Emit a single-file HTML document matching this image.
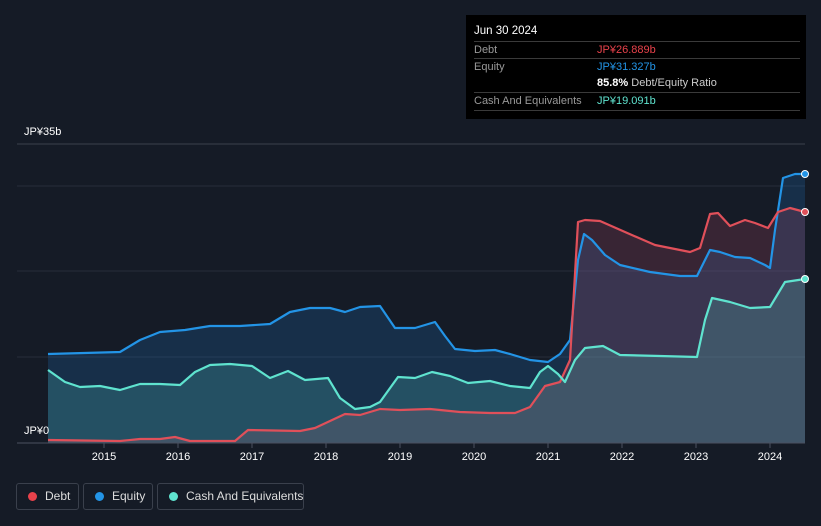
<!DOCTYPE html>
<html><head><meta charset="utf-8"><style>
html,body{margin:0;width:821px;height:526px;overflow:hidden}
body{background:#151b26;font-family:"Liberation Sans","Noto Sans CJK JP",sans-serif;position:relative;color:#fff}
.tt{position:absolute;left:466px;top:15px;width:340px;height:104px;background:#000;font-size:11px}
.tt .h{position:absolute;left:8px;top:10px;font-size:11.5px;color:#fff}
.row{position:absolute;left:8px;width:326px;border-top:1px solid #3a3a3a;height:17px;line-height:17px;color:#999;white-space:nowrap}
.row span{position:absolute;left:123px}
.lg{position:absolute;top:483px;height:27px;border:1px solid #3a404c;border-radius:3px;font-size:12px;color:#ddd;line-height:25px;box-sizing:border-box;white-space:nowrap}
.lg i{position:absolute;left:11px;top:8px;width:9px;height:9px;border-radius:50%}
.lg b{font-weight:normal;position:absolute;left:28px}
.ax{position:absolute;font-size:11px;color:#fff}
</style></head><body>
<svg width="821" height="526" style="position:absolute;left:0;top:0">
<line x1="17" y1="144" x2="805" y2="144" stroke="#3a404c"/>
<line x1="17" y1="186" x2="805" y2="186" stroke="#262d3a"/>
<line x1="17" y1="271" x2="805" y2="271" stroke="#262d3a"/>
<line x1="17" y1="357" x2="805" y2="357" stroke="#262d3a"/>
<path fill="rgba(33,120,200,0.22)" d="M48,354 L120,352 L140,340 L160,332 L185,330 L210,326 L240,326 L270,324 L290,312 L310,308 L330,308 L345,312 L360,307 L380,306 L395,328 L415,328 L435,322 L445,336 L455,349 L475,351 L495,350 L510,354 L530,360 L548,362 L560,354 L570,340 L578,260 L584,234 L592,240 L605,255 L620,265 L650,272 L680,276 L697,276 L705,260 L710,250 L720,252 L735,257 L750,258 L765,265 L770,268 L775,230 L783,178 L795,174 L805,174 L805,443 L48,443Z"/>
<path fill="rgba(200,80,110,0.2)" d="M48,440 L120,441 L140,439 L160,439 L175,437 L190,441 L235,441 L248,430 L300,431 L315,428 L345,414 L360,415 L380,409 L400,410 L430,409 L460,412 L490,413 L515,413 L530,407 L545,386 L560,382 L570,360 L578,222 L585,220 L600,221 L625,232 L655,245 L690,252 L700,248 L710,214 L718,213 L730,226 L745,220 L755,223 L768,228 L778,212 L790,208 L805,212 L805,443 L48,443Z"/>
<path fill="rgba(88,200,190,0.22)" d="M48,370 L65,382 L80,387 L100,386 L120,390 L140,384 L160,384 L180,385 L195,372 L210,365 L230,364 L252,366 L270,378 L288,371 L305,380 L328,378 L340,398 L355,409 L370,407 L380,402 L398,377 L415,378 L432,372 L450,376 L468,383 L490,381 L510,386 L530,388 L540,372 L548,366 L558,374 L565,382 L575,360 L585,348 L603,346 L620,355 L660,356 L697,357 L705,320 L712,298 L730,302 L750,308 L770,307 L785,282 L805,279 L805,443 L48,443Z"/>
<g fill="none" stroke-width="2.2" stroke-linejoin="round">
<path stroke="#2394e6" d="M48,354 L120,352 L140,340 L160,332 L185,330 L210,326 L240,326 L270,324 L290,312 L310,308 L330,308 L345,312 L360,307 L380,306 L395,328 L415,328 L435,322 L445,336 L455,349 L475,351 L495,350 L510,354 L530,360 L548,362 L560,354 L570,340 L578,260 L584,234 L592,240 L605,255 L620,265 L650,272 L680,276 L697,276 L705,260 L710,250 L720,252 L735,257 L750,258 L765,265 L770,268 L775,230 L783,178 L795,174 L805,174"/>
<path stroke="#e0505a" d="M48,440 L120,441 L140,439 L160,439 L175,437 L190,441 L235,441 L248,430 L300,431 L315,428 L345,414 L360,415 L380,409 L400,410 L430,409 L460,412 L490,413 L515,413 L530,407 L545,386 L560,382 L570,360 L578,222 L585,220 L600,221 L625,232 L655,245 L690,252 L700,248 L710,214 L718,213 L730,226 L745,220 L755,223 L768,228 L778,212 L790,208 L805,212"/>
<path stroke="#5fe3cf" d="M48,370 L65,382 L80,387 L100,386 L120,390 L140,384 L160,384 L180,385 L195,372 L210,365 L230,364 L252,366 L270,378 L288,371 L305,380 L328,378 L340,398 L355,409 L370,407 L380,402 L398,377 L415,378 L432,372 L450,376 L468,383 L490,381 L510,386 L530,388 L540,372 L548,366 L558,374 L565,382 L575,360 L585,348 L603,346 L620,355 L660,356 L697,357 L705,320 L712,298 L730,302 L750,308 L770,307 L785,282 L805,279"/>
</g>
<line x1="17" y1="443" x2="805" y2="443" stroke="#4a5060"/>
<g stroke="#4a5060"><line x1="104" y1="443" x2="104" y2="448"/><line x1="178" y1="443" x2="178" y2="448"/><line x1="252" y1="443" x2="252" y2="448"/><line x1="326" y1="443" x2="326" y2="448"/><line x1="400" y1="443" x2="400" y2="448"/><line x1="474" y1="443" x2="474" y2="448"/><line x1="548" y1="443" x2="548" y2="448"/><line x1="622" y1="443" x2="622" y2="448"/><line x1="696" y1="443" x2="696" y2="448"/><line x1="770" y1="443" x2="770" y2="448"/></g>
<circle cx="805" cy="174" r="3.5" fill="#2394e6" stroke="#fff" stroke-width="1"/>
<circle cx="805" cy="212" r="3.5" fill="#e0505a" stroke="#fff" stroke-width="1"/>
<circle cx="805" cy="279" r="3.5" fill="#5fe3cf" stroke="#fff" stroke-width="1"/>
<g fill="#fff" font-size="11" text-anchor="middle" font-family="Liberation Sans,sans-serif">
<text x="104" y="460">2015</text><text x="178" y="460">2016</text><text x="252" y="460">2017</text><text x="326" y="460">2018</text><text x="400" y="460">2019</text><text x="474" y="460">2020</text><text x="548" y="460">2021</text><text x="622" y="460">2022</text><text x="696" y="460">2023</text><text x="770" y="460">2024</text>
</g>
</svg>
<div class="ax" style="left:24px;top:126px">JP¥35b</div>
<div class="ax" style="left:24px;top:425px">JP¥0</div>
<div class="tt">
<div class="h">Jun 30 2024</div>
<div class="row" style="top:26px">Debt<span style="color:#e8424b">JP¥26.889b</span></div>
<div class="row" style="top:43px">Equity<span style="color:#2394e6">JP¥31.327b</span></div>
<div class="row" style="top:60px;border-top:none"><span style="color:#ccc"><b style="color:#fff">85.8%</b> Debt/Equity Ratio</span></div>
<div class="row" style="top:77px">Cash And Equivalents<span style="color:#5fe3cf">JP¥19.091b</span></div>
<div class="row" style="top:95px;height:0"></div>
</div>
<div class="lg" style="left:16px;width:63px"><i style="background:#e8424b"></i><b>Debt</b></div>
<div class="lg" style="left:83px;width:70px"><i style="background:#2394e6"></i><b>Equity</b></div>
<div class="lg" style="left:157px;width:147px"><i style="background:#5fe3cf"></i><b>Cash And Equivalents</b></div>
</body></html>
